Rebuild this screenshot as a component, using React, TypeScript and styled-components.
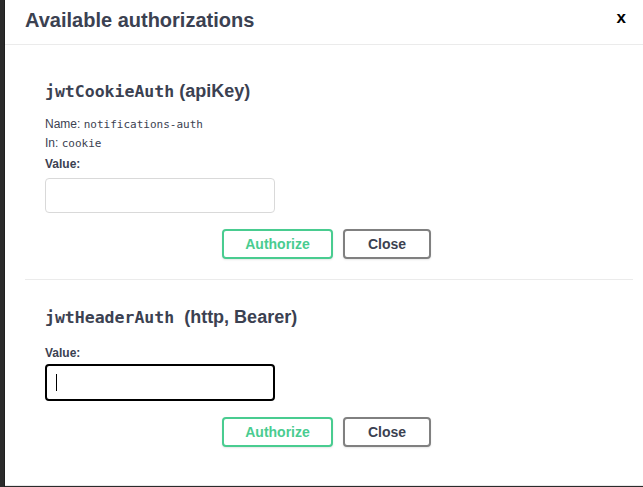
import React from 'react';
import styled, { createGlobalStyle } from 'styled-components';

const GlobalStyle = createGlobalStyle`
  html, body {
    margin: 0;
    padding: 0;
    height: 100%;
    background: #2b2b2b;
  }
  * {
    box-sizing: border-box;
  }
`;

const Page = styled.div`
  display: flex;
  height: 487px;
  overflow: hidden;
  background: #2b2b2b;
`;

const Backdrop = styled.div`
  width: 5px;
  flex-shrink: 0;
  background: #2b2b2b;
  border-right: 1px solid #1f1f1f;
`;

const Modal = styled.div`
  flex: 1;
  height: 486px;
  background: #fff;
  border-bottom: 1px solid #e8e8e8;
  display: flex;
  flex-direction: column;
  font-family: 'Liberation Sans', Arial, sans-serif;
  color: #3b4151;
`;

const Header = styled.div`
  height: 45px;
  display: flex;
  align-items: center;
  justify-content: space-between;
  padding: 0 17px 0 20px;
  border-bottom: 1px solid #ebebeb;
`;

const Title = styled.h3`
  margin: 0 0 4px;
  font-size: 20px;
  font-weight: 700;
  color: #3b4151;
`;

const CloseX = styled.button`
  background: none;
  border: none;
  padding: 0;
  margin: 0 0 9px;
  font-family: 'Liberation Sans', Arial, sans-serif;
  font-size: 17px;
  font-weight: 700;
  color: #000;
  cursor: pointer;
`;

const Content = styled.div`
  padding: 0 10px 0 20px;
`;

const AuthBlock = styled.div<{ first?: boolean; last?: boolean }>`
  padding: ${p => (p.first ? '35px' : '26px')} 20px 20px;
  border-bottom: ${p => (p.last ? 'none' : '1px solid #ebebeb')};
`;

const SchemeTitle = styled.h4`
  margin: 0 0 12px;
  font-size: 18px;
  line-height: 22px;
  font-weight: 700;
  color: #3b4151;
`;

const SchemeName = styled.code`
  font-family: 'DejaVu Sans Mono', monospace;
  font-size: 16.5px;
  font-weight: 700;
  margin-right: 5px;
`;

const InfoLine = styled.p`
  margin: 0;
  font-size: 12px;
  line-height: 19px;
`;

const InfoCode = styled.code`
  font-family: 'DejaVu Sans Mono', monospace;
  font-size: 11px;
`;

const ValueLabel = styled.label<{ tight?: boolean }>`
  display: block;
  margin-top: ${p => (p.tight ? '16px' : '3px')};
  font-size: 12px;
  line-height: 16px;
  font-weight: 700;
`;

const InputWrap = styled.div<{ gap: number }>`
  position: relative;
  width: 230px;
  margin-top: ${p => p.gap}px;
`;

const ValueInput = styled.input<{ focused?: boolean }>`
  display: block;
  width: 230px;
  height: ${p => (p.focused ? '37px' : '35px')};
  padding: 8px 10px;
  border: ${p => (p.focused ? '2px solid #000' : '1px solid #d9d9d9')};
  border-radius: 4px;
  background: #fff;
  font-size: 13px;
  outline: none;
`;

const Caret = styled.span`
  position: absolute;
  left: 11px;
  top: 10px;
  width: 1px;
  height: 17px;
  background: #000;
`;

const ButtonRow = styled.div`
  display: flex;
  justify-content: center;
  gap: 10px;
  margin-top: 16px;
  padding-right: 5px;
`;

const Button = styled.button<{ variant: 'authorize' | 'close' }>`
  width: ${p => (p.variant === 'authorize' ? '111px' : '88px')};
  height: 30px;
  padding: 0;
  background: #fff;
  border: 2px solid ${p => (p.variant === 'authorize' ? '#49cc90' : '#808080')};
  border-radius: 4px;
  box-shadow: 0 1px 2px rgba(0, 0, 0, 0.1);
  font-family: 'Liberation Sans', Arial, sans-serif;
  font-size: 14px;
  font-weight: 700;
  color: ${p => (p.variant === 'authorize' ? '#49cc90' : '#3b4151')};
  cursor: pointer;
`;

const App: React.FC = () => {
  return (
    <>
      <GlobalStyle />
      <Page>
        <Backdrop />
        <Modal>
          <Header>
            <Title>Available authorizations</Title>
            <CloseX>x</CloseX>
          </Header>
          <Content>
            <AuthBlock first>
              <SchemeTitle>
                <SchemeName>jwtCookieAuth</SchemeName>(apiKey)
              </SchemeTitle>
              <InfoLine>
                Name: <InfoCode>notifications-auth</InfoCode>
              </InfoLine>
              <InfoLine>
                In: <InfoCode>cookie</InfoCode>
              </InfoLine>
              <ValueLabel>Value:</ValueLabel>
              <InputWrap gap={6}>
                <ValueInput type="text" />
              </InputWrap>
              <ButtonRow>
                <Button variant="authorize">Authorize</Button>
                <Button variant="close">Close</Button>
              </ButtonRow>
            </AuthBlock>
            <AuthBlock last>
              <SchemeTitle>
                <SchemeName>jwtHeaderAuth</SchemeName> (http, Bearer)
              </SchemeTitle>
              <ValueLabel tight>Value:</ValueLabel>
              <InputWrap gap={3}>
                <ValueInput type="text" focused />
                <Caret />
              </InputWrap>
              <ButtonRow>
                <Button variant="authorize">Authorize</Button>
                <Button variant="close">Close</Button>
              </ButtonRow>
            </AuthBlock>
          </Content>
        </Modal>
      </Page>
    </>
  );
};

export default App;
